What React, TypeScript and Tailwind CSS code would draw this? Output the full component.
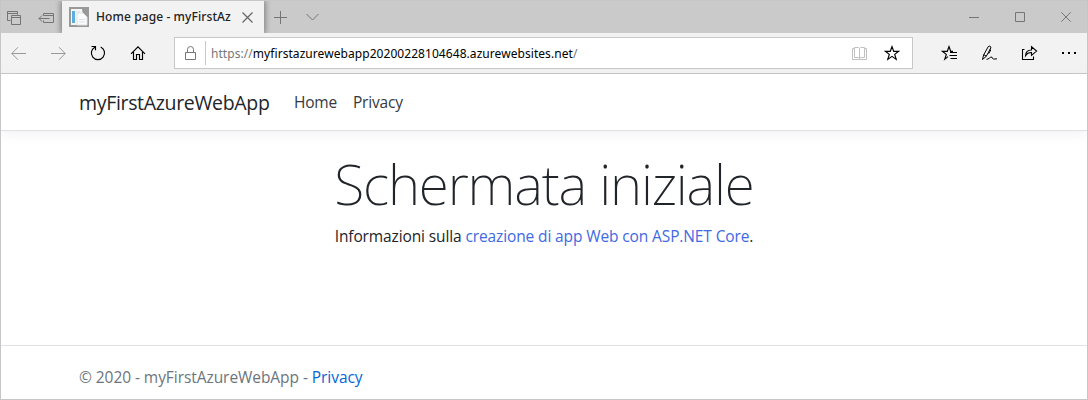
import type { ReactNode } from "react";

type IconProps = { className: string; w: number; h: number; children: ReactNode };

function Icon({ className, w, h, children }: IconProps) {
  return (
    <svg className={`shrink-0 ${className}`} width={w} height={h} viewBox={`0 0 ${w} ${h}`} fill="none" stroke="currentColor" strokeWidth="1">
      {children}
    </svg>
  );
}

const STAR = "M8 1.6L9.7 6.3H14.7L10.7 9.4L12.2 14.4L8 11.4L3.8 14.4L5.3 9.4L1.3 6.3H6.3Z";

function TabStrip() {
  return (
    <div className="flex h-8 shrink-0 items-center bg-[#cacaca] text-[#757575]">
      <Icon className="ml-1.5" w={15} h={16}>
        <path d="M3.5 11.5H.5V2.5H10.5V5.5M.5 4.5H10.5M4.5 6.5H13.5V15.5H4.5ZM4.5 8.5H13.5" />
      </Icon>
      <Icon className="ml-4" w={17} h={16}>
        <path d="M5.5 6.5V4.5H15.5V13.5H5.5V11.5M5.5 6.5H15.5M.8 9.5H11.5M4 6.5L1 9.5L4 12.5" />
      </Icon>
      <div className="ml-[7px] flex h-8 w-[202px] shrink-0 items-center bg-[#f2f2f2] shadow-[0_0_6px_1px_rgba(0,0,0,0.4)] [clip-path:inset(0_-7px_0_-7px)]">
        <Icon className="ml-[7px]" w={20} h={20}>
          <rect width="20" height="20" fill="#999" stroke="none" />
          <path d="M2 2H13L14 8V18H2Z" fill="#f4f6f7" stroke="none" />
          <path d="M3 4H6V16H3Z" fill="#5aaee0" stroke="none" />
          <path d="M7 5H11M7 7.5H10" stroke="#d5dde2" />
          <path d="M8 7L10 6H14L18 10V18H8Z" fill="#fbfcfc" stroke="#dde2e5" />
          <path d="M10 12.5H16M10 15H16" stroke="#d9e1e5" />
        </Icon>
        <span className="ml-[7px] w-[136px] overflow-hidden whitespace-nowrap font-['Noto_Sans',sans-serif] text-[12px] font-medium leading-5 tracking-[0.1px] text-[#222]">
          Home page - myFirstAz
        </span>
        <Icon className="ml-[10px] text-[#666]" w={11} h={11}>
          <path d="M.5 .5L10.5 10.5M10.5 .5L.5 10.5" strokeWidth="1.2" />
        </Icon>
      </div>
      <Icon className="ml-[10px]" w={13} h={13}>
        <path d="M6.5 0V13M0 6.5H13" />
      </Icon>
      <Icon className="ml-[19px]" w={13} h={8}>
        <path d="M.5 1L6.5 7L12.5 1" />
      </Icon>
      <Icon className="ml-auto" w={10} h={11}>
        <path d="M0 5.5H10" />
      </Icon>
      <Icon className="ml-9" w={10} h={10}>
        <path d="M.5 .5H9.5V9.5H.5Z" />
      </Icon>
      <Icon className="ml-9 mr-4" w={10} h={10}>
        <path d="M.3 .3L9.7 9.7M9.7 .3L.3 9.7" />
      </Icon>
    </div>
  );
}

function Toolbar() {
  return (
    <div className="flex h-[41px] shrink-0 items-center border-b border-[#c8c8c8] bg-[#f2f2f2] text-black">
      <Icon className="ml-[10px] text-[#999]" w={15} h={15}>
        <path d="M.8 7.5H15M7 1.2L.8 7.5L7 13.8" />
      </Icon>
      <Icon className="ml-[25px] text-[#999]" w={15} h={15}>
        <path d="M0 7.5H14.2M8 1.2L14.2 7.5L8 13.8" />
      </Icon>
      <Icon className="ml-6" w={16} h={16}>
        <path d="M1.5 1.5H5.5V5.2M5.2 2A6.6 6.6 0 1 0 10.7 2" strokeWidth="1.15" />
      </Icon>
      <Icon className="ml-6" w={16} h={16}>
        <path d="M1 8.8L8 1.8L15 8.8M3.5 7V14.5H6.5V9.5H9.5V14.5H12.5V7" strokeWidth="1.15" />
      </Icon>
      <div className="ml-7 flex h-8 w-[739px] shrink-0 items-center border border-[#c8c8c8] bg-white">
        <Icon className="ml-[10px] text-[#777]" w={11} h={14}>
          <path d="M.5 6.5H10.5V13.5H.5ZM2.5 6.5V3.5A3 3 0 0 1 8.5 3.5V6.5" />
        </Icon>
        <div className="ml-[9px] h-6 w-px bg-[#c8c8c8]" />
        <span className="ml-[5px] whitespace-nowrap pt-0.5 font-['Noto_Sans',sans-serif] text-[12px] leading-5 tracking-[0.06px] text-[#777]">
          https://<span className="text-black">myfirstazurewebapp20200228104648.azurewebsites.net</span>/
        </span>
        <Icon className="ml-auto text-[#c1c1c1]" w={15} h={15}>
          <path d="M7.5 2.5V13M2.5 1.5H6.5L7.5 2.5L8.5 1.5H12.5V11.5H8.5L7.5 12.5L6.5 11.5H2.5ZM2.5 2.5H.5V13.5H14.5V2.5H12.5" />
        </Icon>
        <Icon className="ml-[17px] mr-3" w={16} h={16}>
          <path d={STAR} strokeWidth="1.15" />
        </Icon>
      </div>
      <Icon className="ml-7" w={17} h={16}>
        <path d="M7 11.6L3.8 14.2L5.3 9.4L1.3 6.3H6.3L8 1.6L9.7 6.3H12" strokeWidth="1.15" />
        <path d="M9 7.5H16M8.5 10.5H16M9.5 13.5H16" />
      </Icon>
      <Icon className="ml-[23px]" w={17} h={16}>
        <path d="M1.5 14.5L2.6 10L7.2 1.7C8.3 .3 10.4 1.4 9.8 3L5.2 11.4L1.5 14.5ZM2.8 9.7L5.4 11.2M5.5 14.3C7.5 14.8 9.5 11.2 11 12.2C11.6 14.7 13 14 16 13.8M8.7 4.5L9.7 5L7.7 8.7" />
      </Icon>
      <Icon className="ml-[23px]" w={17} h={16}>
        <path d="M3.5 4.5H1.5V14.5H12.5V11.5M4.5 10.7C4.7 6.9 7.3 5 10.5 5V1.8L15.6 6.1L10.5 10.4V7.5C7.9 7.4 6 8.3 4.5 10.7Z" strokeWidth="1.1" />
      </Icon>
      <Icon className="ml-6" w={15} h={3}>
        <path d="M0 1H2M6 1H8M12 1H14" strokeWidth="2" />
      </Icon>
    </div>
  );
}

export default function App() {
  return (
    <div className="flex h-[400px] w-[1088px] flex-col overflow-hidden border border-[#c6c6c6] bg-white font-['Open_Sans',sans-serif] text-base text-[#212529]">
      <TabStrip />
      <Toolbar />
      <nav className="flex h-[57px] shrink-0 items-center whitespace-nowrap border-b border-[#dee2e6] pl-[78px] pt-0.5 shadow-[0_4px_12px_rgba(0,0,0,0.05)]">
        <a className="w-[215px] text-[19.5px] leading-[30px] tracking-[-0.33px]">myFirstAzureWebApp</a>
        <a className="w-[59px] text-[15.5px] tracking-[-0.2px] text-[#343a40]">Home</a>
        <a className="text-[15.5px] tracking-[-0.2px] text-[#343a40]">Privacy</a>
      </nav>
      <main className="flex flex-1 flex-col items-center whitespace-nowrap pt-[19px]">
        <h1 className="font-['Noto_Sans',sans-serif] text-[55px] font-[200] leading-[67px] tracking-[-1.15px]">Schermata iniziale</h1>
        <p className="mt-[7px] text-[15.5px] leading-6 tracking-[-0.12px]">
          Informazioni sulla <a className="text-[#4169e1]">creazione di app Web con ASP.NET Core</a>.
        </p>
      </main>
      <footer className="flex h-[54px] shrink-0 items-start whitespace-nowrap border-t border-[#dee2e6] pl-[78px] pt-[19px] text-[15.5px] leading-6 tracking-[-0.06px] text-[#6c757d]">
        <span>
          © 2020 - myFirstAzureWebApp - <a className="text-[#0366d6]">Privacy</a>
        </span>
      </footer>
    </div>
  );
}
